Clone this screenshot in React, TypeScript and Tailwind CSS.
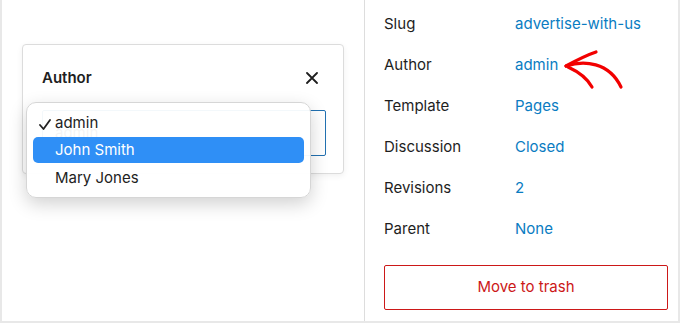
import React from 'react';

const rows = [
  { label: 'Slug', value: 'advertise-with-us' },
  { label: 'Author', value: 'admin' },
  { label: 'Template', value: 'Pages' },
  { label: 'Discussion', value: 'Closed' },
  { label: 'Revisions', value: '2' },
  { label: 'Parent', value: 'None' },
];

function AuthorPopover() {
  return (
    <div className="relative mt-[44px] ml-[20px] w-[322px] h-[130px] rounded-[4px] border border-[#dcdcdc] bg-white shadow-[0_2px_6px_rgba(0,0,0,0.06)]">
      <div className="flex items-center justify-between pl-[19px] pr-[25px] pt-[22px]">
        <span className="text-[15px] font-semibold text-[#1e1e1e]">Author</span>
        <svg width="12" height="12" viewBox="0 0 12 12" className="text-[#1e1e1e]">
          <path d="M1 1 L11 11 M11 1 L1 11" stroke="currentColor" strokeWidth="1.8" strokeLinecap="round" />
        </svg>
      </div>
      {/* select field behind the native menu */}
      <div className="mt-[20px] ml-[19px] w-[284px] h-[46px] rounded-[2px] border-[1.5px] border-[#2271b1] px-3 text-[15px] leading-[43px] text-[#1e1e1e]">
        admin
      </div>

      {/* native dropdown menu */}
      <div className="absolute left-[3px] top-[57px] w-[285px] rounded-[10px] border border-[#d6d6d6] bg-white/95 px-[6px] pt-[7px] pb-[6px] shadow-[0_6px_18px_rgba(0,0,0,0.18)]">
        <div className="relative flex h-[27px] items-center pl-[22px] text-[15px] text-[#222]">
          <svg width="12" height="11" viewBox="0 0 12 11" className="absolute left-[6px] top-[9px]">
            <path d="M1 6 L4.5 10 L11 1" fill="none" stroke="#222" strokeWidth="1.8" strokeLinecap="round" strokeLinejoin="round" />
          </svg>
          admin
        </div>
        <div className="flex h-[26px] items-center rounded-[5px] bg-[#2f8ff6] pl-[22px] text-[15px] text-white">
          John Smith
        </div>
        <div className="flex h-[28px] items-center pl-[22px] pt-[2px] text-[15px] text-[#222]">
          Mary Jones
        </div>
      </div>
    </div>
  );
}

export default function App() {
  return (
    <div
      className="flex w-[680px] h-[323px] overflow-hidden border-l-2 border-r-2 border-b-2 border-[#e8e8e8] bg-white"
      style={{ fontFamily: 'Inter, "Noto Sans", sans-serif' }}
    >
      <div className="w-[363px] shrink-0 border-r border-[#dddddd]">
        <AuthorPopover />
      </div>

      <div className="relative flex-1 pl-[19px] pr-[10px] pt-[4px]">
        {rows.map((r) => (
          <div key={r.label} className="flex h-[41px] items-center text-[15px]">
            <span className="w-[131px] text-[#1e1e1e]">{r.label}</span>
            <span className="text-[#0a7cc2]">{r.value}</span>
          </div>
        ))}

        <button className="mt-[15px] h-[45px] w-full rounded-[2px] border border-[#cc1818] text-[15px] text-[#cc1818]">
          Move to trash
        </button>

        {/* hand-drawn arrow */}
        <svg width="80" height="50" viewBox="0 0 80 50" className="absolute left-[189px] top-[45px]">
          <g fill="none" stroke="#f20000" strokeWidth="3.2" strokeLinecap="round">
            <path d="M12 21 C30 15, 55 17, 67 42" />
            <path d="M12 21 C23 15, 33 10, 42 7" />
            <path d="M14 22 C25 27, 33 33, 38 42" />
          </g>
        </svg>
      </div>
    </div>
  );
}
